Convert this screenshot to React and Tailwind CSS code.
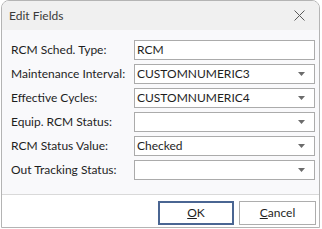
import React from "react";

const rows = [
  { label: "RCM Sched. Type:", value: "RCM", dropdown: false },
  { label: "Maintenance Interval:", value: "CUSTOMNUMERIC3", dropdown: true },
  { label: "Effective Cycles:", value: "CUSTOMNUMERIC4", dropdown: true },
  { label: "Equip. RCM Status:", value: "", dropdown: true },
  { label: "RCM Status Value:", value: "Checked", dropdown: true },
  { label: "Out Tracking Status:", value: "", dropdown: true },
];

function Arrow() {
  return (
    <svg width="7" height="4" viewBox="0 0 7 4" className="shrink-0">
      <polygon points="0,0 7,0 3.5,4" fill="#6b6b6b" />
    </svg>
  );
}

export default function App() {
  return (
    <div
      className="w-[322px] h-[229px] bg-white overflow-hidden"
      style={{ fontFamily: 'Lato, "Noto Sans", sans-serif' }}
    >
      <div className="ml-[1px] w-[319px] h-[228px] border border-[#b4b4b4] rounded-t-[8px] flex flex-col overflow-hidden">
        <div className="h-[29px] shrink-0 bg-[#f0f0f0] flex items-center justify-between pl-[7px] pr-[14px]">
          <span className="text-[12px] text-[#3a3a3a]">Edit Fields</span>
          <svg width="11" height="11" viewBox="0 0 11 11">
            <path d="M0.5 0.5 L10.5 10.5 M10.5 0.5 L0.5 10.5" stroke="#5a5a5a" strokeWidth="1" />
          </svg>
        </div>
        <div className="h-[164px] shrink-0 bg-[#f9f9fb] pt-[10px] pl-[9px] flex flex-col gap-[4px]">
          {rows.map((r) => (
            <div key={r.label} className="flex items-center h-[20px]">
              <span className="w-[123px] text-[12px] text-[#1e1e1e] leading-none whitespace-nowrap">{r.label}</span>
              <div className="w-[181px] h-[20px] bg-white border border-[#ababab] flex items-center justify-between pl-[2px] pr-[9px]">
                <span className="text-[12px] text-[#1e1e1e] leading-none">{r.value}</span>
                {r.dropdown && <Arrow />}
              </div>
            </div>
          ))}
        </div>
        <div className="flex-1 bg-white border-t border-[#d9d9d9] flex justify-end items-start pt-[6px] pr-[3px] gap-[5px]">
          <button className="w-[76px] h-[24px] border-2 border-[#4a6592] bg-white text-[12px] text-[#1e1e1e] flex items-center justify-center">
            <span><span className="underline">O</span>K</span>
          </button>
          <button className="w-[77px] h-[24px] border border-[#adadad] bg-white text-[12px] text-[#1e1e1e] flex items-center justify-center">
            <span><span className="underline">C</span>ancel</span>
          </button>
        </div>
      </div>
    </div>
  );
}
